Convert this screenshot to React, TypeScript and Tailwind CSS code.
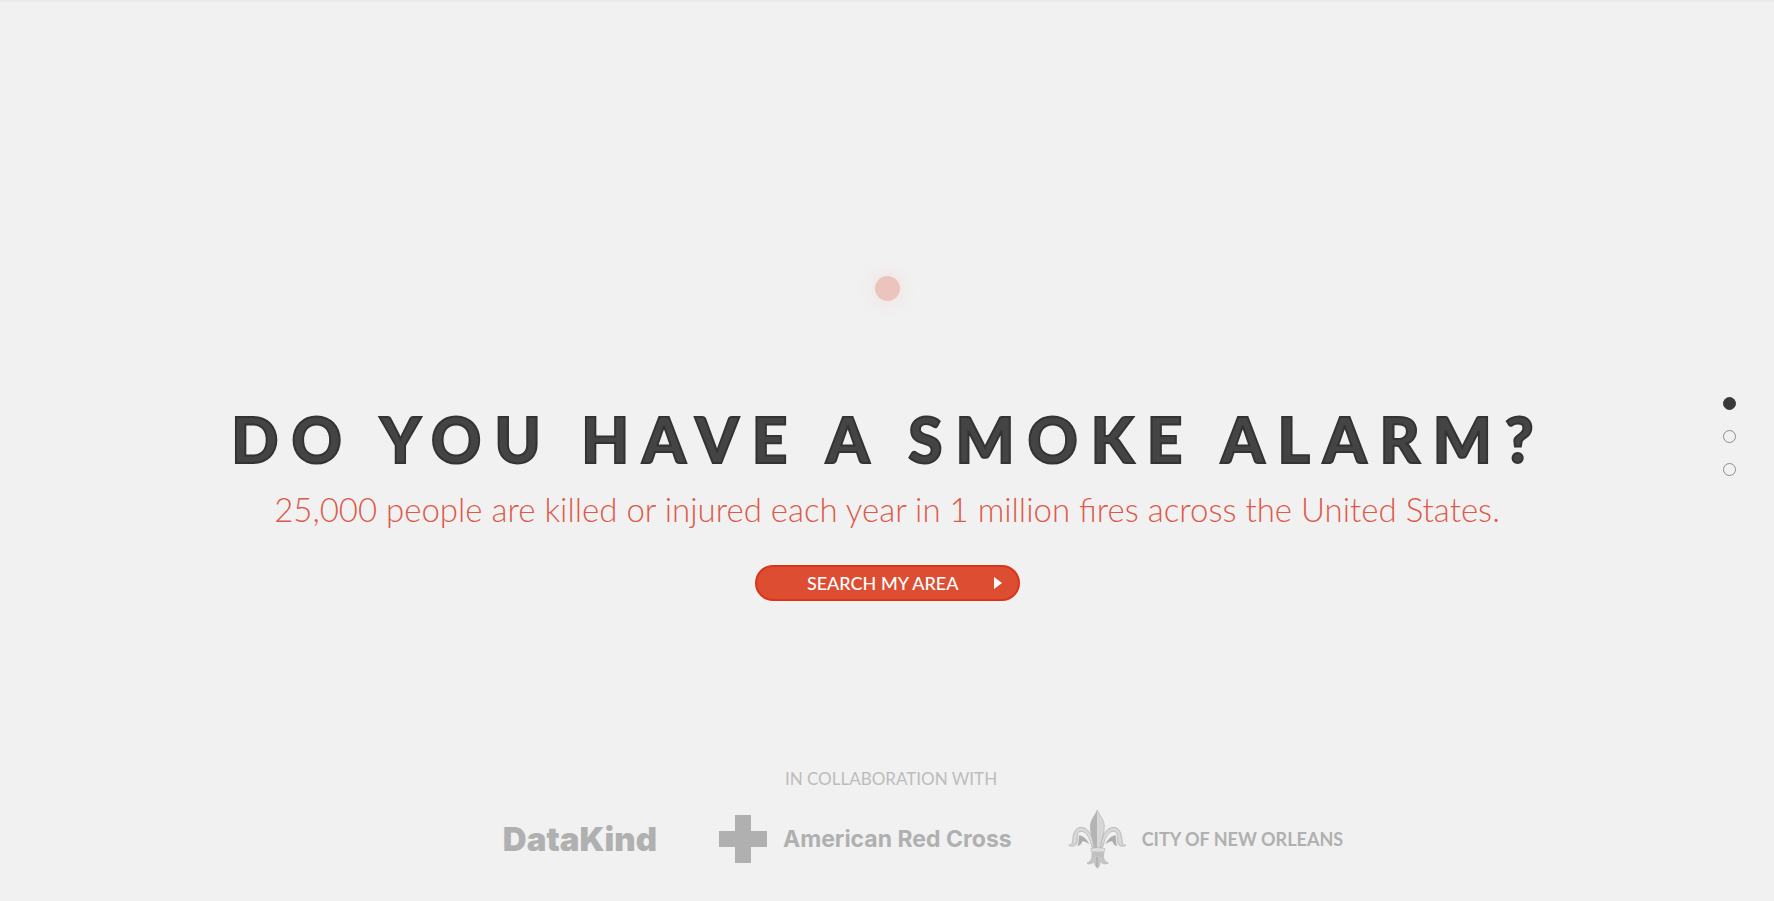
import React from 'react'

const sections = [
  { id: 'intro', label: 'Intro' },
  { id: 'search', label: 'Search' },
  { id: 'about', label: 'About' },
]

function SectionNav({ active }: { active: string }) {
  return (
    <nav className="fixed right-[38px] top-[397px] flex flex-col gap-5">
      {sections.map((section) => (
        <a
          key={section.id}
          href={`#${section.id}`}
          aria-label={section.label}
          className={`block w-[13px] h-[13px] rounded-full border
            ${section.id === active ? "bg-[#3a3a3a] border-[#3a3a3a]" : "border-[#8c8c8c]"}
          `}
        />
      ))}
    </nav>
  )
}

function RedCrossIcon() {
  return (
    <svg className="w-12 h-12 shrink-0" viewBox="0 0 48 48" aria-hidden="true">
      <path d="M16 0h16v16h16v16H32v16H16V32H0V16h16z" fill="#b0b0b0" />
    </svg>
  )
}

function SidePetal() {
  return (
    <>
      <path
        d="M182 178C176 150 166 130 150 129C139 129 137 140 138 152C139 164 134 173 124 174C119 174 114 173 112 170C121 171 123 164 124 155C125 132 134 117 149 117C168 117 181 136 187 160L189 178Z"
        fill="#d2d2d2"
        stroke="#b0b0b0"
        strokeWidth="2"
        strokeLinejoin="round"
      />
      <path
        d="M138 174C143 166 141 154 143 141C154 142 166 151 174 168C165 162 158 158 153 159C151 166 147 172 138 174Z"
        fill="#adadad"
      />
      <path d="M130 162C129 141 136 123 149 123C163 124 175 139 182 163" fill="none" stroke="#e2e2e2" strokeWidth="3" />
    </>
  )
}

function FleurDeLis() {
  return (
    <svg className="w-[58px] h-[60px] shrink-0" viewBox="110 62 174 180" aria-hidden="true">
      <SidePetal />
      <g transform="matrix(-1 0 0 1 396 0)">
        <SidePetal />
      </g>
      <path d="M198 65C192 81 177 94 177 114C177 136 186 155 189 179H198Z" fill="#b4b4b4" />
      <path d="M198 65C204 81 219 94 219 114C219 136 210 155 207 179H198Z" fill="#d6d6d6" />
      <path
        d="M198 65C192 81 177 94 177 114C177 136 186 155 189 179H207C210 155 219 136 219 114C219 94 204 81 198 65Z"
        fill="none"
        stroke="#b0b0b0"
        strokeWidth="2"
      />
      <path d="M178 181Q199 175 221 181L219 190Q199 186 180 190Z" fill="#e2e2e2" stroke="#b8b8b8" strokeWidth="2" />
      <path d="M180 192Q199 188 219 192L218 204Q199 199 181 204Z" fill="#c0c0c0" />
      <path
        d="M182 204C181 214 176 221 167 224C174 229 183 227 188 219C189 228 193 235 199 240C203 235 206 228 207 219C213 227 223 229 231 224C222 221 217 214 216 204Q199 199 182 204Z"
        fill="#c6c6c6"
        stroke="#b0b0b0"
        strokeWidth="2"
      />
      <path d="M197 206V236" stroke="#a8a8a8" strokeWidth="4" />
    </svg>
  )
}

function Partners() {
  return (
    <footer className="mt-[166px] w-full flex flex-col items-center text-[#b0b0b0]">
      <p className="pl-2 text-[17px] leading-6 text-[#bcbcbc] font-['Lato',sans-serif]">IN COLLABORATION WITH</p>
      <div className="mt-[18px] pl-[72px] flex items-center">
        <span className="text-[33px] leading-10 font-black font-['Inter',sans-serif]">DataKind</span>
        <div className="ml-[62px] flex items-center gap-4">
          <RedCrossIcon />
          <span className="text-[23px] leading-8 font-bold font-['Inter',sans-serif]">American Red Cross</span>
        </div>
        <div className="ml-[56px] flex items-center gap-4">
          <FleurDeLis />
          <span className="text-[18px] leading-6 font-bold font-['Lato',sans-serif]">CITY OF NEW ORLEANS</span>
        </div>
      </div>
    </footer>
  )
}

function App() {
  return (
    <div className="min-h-screen bg-[#f1f1f1] border-t-2 border-[#e9e9e9] font-['Lato',sans-serif]">
      <SectionNav active="intro" />
      <main id="intro" className="flex flex-col items-center text-center pt-[274px]">
        <div className="w-[25px] h-[25px] rounded-full bg-[#ebc4be] shadow-[0_0_16px_4px_rgba(240,190,180,0.2)]" />
        <h1 className="mt-[98px] pl-1 text-[62px] leading-[80px] font-black tracking-[0.21em] text-[#444444] [-webkit-text-stroke:2px_#333333]">
          DO YOU HAVE A SMOKE ALARM?
        </h1>
        <p className="mt-[6px] text-[33px] leading-[48px] font-light text-[#dd5a4a]">
          25,000 people are killed or injured each year in 1 million fires across the United States.
        </p>
        <button
          type="button"
          className="mt-8 w-[265px] h-9 rounded-full border-2 border-[#db3519] bg-[#dc4d32] text-white text-[18px] leading-[30px] font-medium flex items-center justify-end pr-4 cursor-pointer"
        >
          <span className="mr-[35px]">SEARCH MY AREA</span>
          <svg className="w-2 h-3" viewBox="0 0 8 12" aria-hidden="true">
            <path d="M0 0L8 6L0 12z" fill="#ffffff" />
          </svg>
        </button>
        <Partners />
      </main>
    </div>
  )
}

export default App
